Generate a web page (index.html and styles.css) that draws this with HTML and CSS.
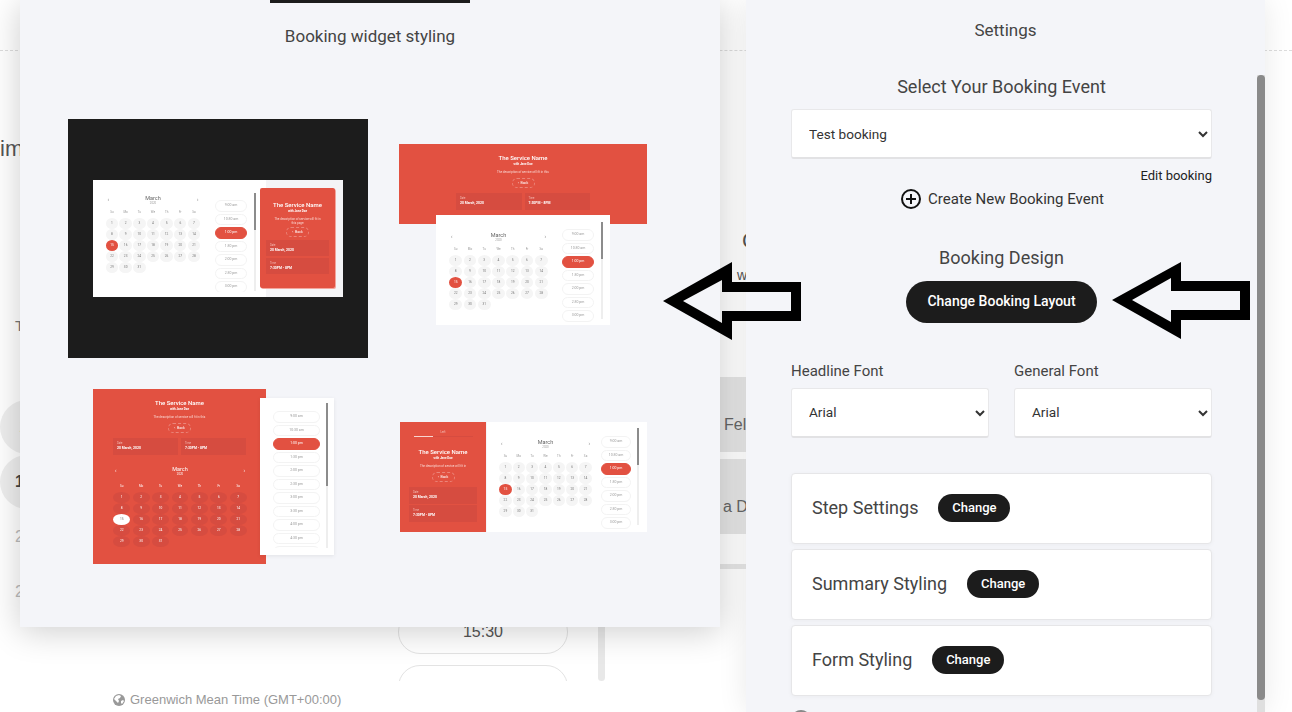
FILE: index.html
```html
<!DOCTYPE html>
<html lang="en">
<head>
<meta charset="utf-8">
<title>Booking widget styling</title>
<link rel="stylesheet" href="styles.css">
</head>
<body>
<div class="backdrop">
  <div class="bd-top"></div>
  <div class="bd-main">
    <div class="bd-left">
      <div class="bd-heading">im</div>
      <div class="bd-dow">T</div>
      <div class="bd-day bd-day-fill bd-day-first">1</div>
      <div class="bd-day bd-day-fill bd-day-bold">1</div>
      <div class="bd-day bd-day-off">2</div>
      <div class="bd-day bd-day-off">2</div>
      <div class="bd-zone">
        <svg class="globe" viewBox="0 0 12 12" aria-hidden="true"><circle cx="6" cy="6" r="6" fill="#999"/><path d="M3 2l3-1 2 1-1 2-2 1 1 2-1 2-2-2-2-2zM8 7l2-1 1 1-2 3-1-1z" fill="#fff"/></svg>
        <span>Greenwich Mean Time (GMT+00:00)</span>
      </div>
    </div>
    <div class="bd-times">
      <div class="bd-pill">15:30</div>
      <div class="bd-pill"></div>
    </div>
    <div class="bd-scroll"></div>
    <div class="bd-right">
      <div class="bd-c">C</div>
      <div class="bd-w">w</div>
      <div class="bd-box bd-box-a">Fel</div>
      <div class="bd-box bd-box-b">a D</div>
      <div class="bd-rule"></div>
    </div>
  </div>
</div>

<section class="modal">
  <div class="modal-tab"></div>
  <h2 class="modal-title">Booking widget styling</h2>
  <div class="thumbs">

    <div class="thumb t1">
      <div class="sheet">
        <div class="cal">
          <div class="cal-head"><b>‹</b><div class="month">March<small>2020</small></div><b>›</b></div>
          <div class="dows"><span>Su</span><span>Mo</span><span>Tu</span><span>We</span><span>Th</span><span>Fr</span><span>Sa</span></div>
          <div class="days"><span>1</span><span>2</span><span>3</span><span>4</span><span>5</span><span>6</span><span>7</span><span>8</span><span>9</span><span>10</span><span>11</span><span>12</span><span>13</span><span>14</span><span class="sel">15</span><span>16</span><span>17</span><span>18</span><span>19</span><span>20</span><span>21</span><span>22</span><span>23</span><span>24</span><span>25</span><span>26</span><span>27</span><span>28</span><span>29</span><span>30</span><span>31</span></div>
        </div>
        <div class="times"><span>9:00 am</span><span>10:30 am</span><span class="sel">1:00 pm</span><span>1:30 pm</span><span>2:00 pm</span><span>2:30 pm</span><span>3:00 pm</span></div>
        <div class="bar"></div>
        <div class="svc">
          <div class="svc-title">The Service Name</div>
          <div class="svc-sub">with Jane Doe</div>
          <div class="svc-desc">The description of service will fit in this page</div>
          <div class="svc-back">‹ &nbsp;Back</div>
          <div class="svc-boxes"><div class="svc-box"><i>Date</i><em>20 March, 2020</em></div><div class="svc-box"><i>Time</i><em>7:30PM - 8PM</em></div></div>
        </div>
      </div>
    </div>

    <div class="thumb t2">
      <div class="svc">
        <div class="svc-title">The Service Name</div>
        <div class="svc-sub">with Jane Doe</div>
        <div class="svc-desc">The description of service will fit in this</div>
        <div class="svc-back">‹ &nbsp;Back</div>
        <div class="svc-boxes"><div class="svc-box"><i>Date</i><em>20 March, 2020</em></div><div class="svc-box"><i>Time</i><em>7:30PM - 8PM</em></div></div>
      </div>
      <div class="sheet">
        <div class="cal">
          <div class="cal-head"><b>‹</b><div class="month">March<small>2020</small></div><b>›</b></div>
          <div class="dows"><span>Su</span><span>Mo</span><span>Tu</span><span>We</span><span>Th</span><span>Fr</span><span>Sa</span></div>
          <div class="days"><span>1</span><span>2</span><span>3</span><span>4</span><span>5</span><span>6</span><span>7</span><span>8</span><span>9</span><span>10</span><span>11</span><span>12</span><span>13</span><span>14</span><span class="sel">15</span><span>16</span><span>17</span><span>18</span><span>19</span><span>20</span><span>21</span><span>22</span><span>23</span><span>24</span><span>25</span><span>26</span><span>27</span><span>28</span><span>29</span><span>30</span><span>31</span></div>
        </div>
        <div class="times"><span>9:00 am</span><span>10:30 am</span><span class="sel">1:00 pm</span><span>1:30 pm</span><span>2:00 pm</span><span>2:30 pm</span><span>3:00 pm</span></div>
        <div class="bar"></div>
      </div>
    </div>

    <div class="thumb t3">
      <div class="svc">
        <div class="svc-title">The Service Name</div>
        <div class="svc-sub">with Jane Doe</div>
        <div class="svc-desc">The description of service will fit in this</div>
        <div class="svc-back">‹ &nbsp;Back</div>
        <div class="svc-boxes"><div class="svc-box"><i>Date</i><em>20 March, 2020</em></div><div class="svc-box"><i>Time</i><em>7:30PM - 8PM</em></div></div>
        <div class="cal">
          <div class="cal-head"><b>‹</b><div class="month">March<small>2020</small></div><b>›</b></div>
          <div class="dows"><span>Su</span><span>Mo</span><span>Tu</span><span>We</span><span>Th</span><span>Fr</span><span>Sa</span></div>
          <div class="days"><span>1</span><span>2</span><span>3</span><span>4</span><span>5</span><span>6</span><span>7</span><span>8</span><span>9</span><span>10</span><span>11</span><span>12</span><span>13</span><span>14</span><span class="sel">15</span><span>16</span><span>17</span><span>18</span><span>19</span><span>20</span><span>21</span><span>22</span><span>23</span><span>24</span><span>25</span><span>26</span><span>27</span><span>28</span><span>29</span><span>30</span><span>31</span></div>
        </div>
      </div>
      <div class="sheet">
        <div class="times"><span>9:00 am</span><span>10:30 am</span><span class="sel">1:00 pm</span><span>1:30 pm</span><span>2:00 pm</span><span>2:30 pm</span><span>3:00 pm</span><span>3:30 pm</span><span>4:00 pm</span><span>4:30 pm</span><span></span></div>
        <div class="bar"></div>
      </div>
    </div>

    <div class="thumb t4">
      <div class="svc">
        <div class="svc-tab">Left</div>
        <div class="svc-line"><span></span></div>
        <div class="svc-title">The Service Name</div>
        <div class="svc-sub">with Jane Doe</div>
        <div class="svc-desc">The description of service will fit in</div>
        <div class="svc-back">‹ &nbsp;Back</div>
        <div class="svc-boxes"><div class="svc-box"><i>Date</i><em>20 March, 2020</em></div><div class="svc-box"><i>Time</i><em>7:30PM - 8PM</em></div></div>
      </div>
      <div class="sheet">
        <div class="cal">
          <div class="cal-head"><b>‹</b><div class="month">March<small>2020</small></div><b>›</b></div>
          <div class="dows"><span>Su</span><span>Mo</span><span>Tu</span><span>We</span><span>Th</span><span>Fr</span><span>Sa</span></div>
          <div class="days"><span>1</span><span>2</span><span>3</span><span>4</span><span>5</span><span>6</span><span>7</span><span>8</span><span>9</span><span>10</span><span>11</span><span>12</span><span>13</span><span>14</span><span class="sel">15</span><span>16</span><span>17</span><span>18</span><span>19</span><span>20</span><span>21</span><span>22</span><span>23</span><span>24</span><span>25</span><span>26</span><span>27</span><span>28</span><span>29</span><span>30</span><span>31</span></div>
        </div>
        <div class="times"><span>9:00 am</span><span>10:30 am</span><span class="sel">1:00 pm</span><span>1:30 pm</span><span>2:00 pm</span><span>2:30 pm</span><span>3:00 pm</span></div>
        <div class="bar"></div>
      </div>
    </div>

  </div>
</section>

<aside class="panel">
  <div class="panel-title">Settings</div>
  <div class="panel-body">
    <div class="panel-content">
      <h3 class="head-event">Select Your Booking Event</h3>
      <select class="field field-event"><option>Test booking</option></select>
      <div class="edit">Edit booking</div>
      <div class="create">
        <svg class="plus" viewBox="0 0 20 20" aria-hidden="true"><circle cx="10" cy="10" r="9" fill="none" stroke="#111" stroke-width="2"/><path d="M10 5v10M5 10h10" stroke="#111" stroke-width="2"/></svg>
        <span>Create New Booking Event</span>
      </div>
      <h3 class="head-design">Booking Design</h3>
      <button class="layout-btn">Change Booking Layout</button>
      <div class="fonts">
        <label class="font-col"><span>Headline Font</span><select class="field"><option>Arial</option></select></label>
        <label class="font-col"><span>General Font</span><select class="field"><option>Arial</option></select></label>
      </div>
      <div class="cards">
        <div class="card"><span>Step Settings</span><button class="pill-btn">Change</button></div>
        <div class="card"><span>Summary Styling</span><button class="pill-btn">Change</button></div>
        <div class="card"><span>Form Styling</span><button class="pill-btn">Change</button></div>
      </div>
      <div class="next-dot"></div>
    </div>
    <div class="scroll"><div class="scroll-thumb"></div></div>
  </div>
</aside>

<svg class="arrow arrow-a" viewBox="663 262 139 78" aria-hidden="true"><path fill-rule="evenodd" d="M663 301L732 262V282H801V321H732V340ZM683 301L722 323V311H791V292H722V280Z"/></svg>
<svg class="arrow arrow-b" viewBox="1112 262 139 78" aria-hidden="true"><path fill-rule="evenodd" d="M1112 300L1181 262V281H1250V320H1181V339ZM1132 300L1171 322V310H1240V291H1171V278Z"/></svg>
</body>
</html>
```
FILE: styles.css
```css
* { box-sizing: border-box; }
html, body { margin: 0; height: 100%; overflow: hidden; }
body { background: #fff; font-family: Roboto, "Liberation Sans", sans-serif; color: #444; }

/* page underneath the overlays */
.backdrop { height: 712px; font-family: "Liberation Sans", Arial, sans-serif; color: #555; overflow: hidden; }
.bd-top { height: 51px; border-bottom: 1px dashed #ddd; }
.bd-main { display: flex; align-items: flex-start; }
.bd-left { width: 398px; flex: none; }
.bd-heading { margin-top: 86px; font-size: 22px; line-height: 24px; }
.bd-dow { margin-top: 156px; padding-left: 15px; font-size: 15px; line-height: 18px; color: #777; }
.bd-day { width: 54px; height: 54px; margin-bottom: 1px; padding-left: 15px; font-size: 16px; line-height: 54px; border-radius: 50%; }
.bd-day-fill { background: #eee; }
.bd-day-first { margin-top: 65px; padding-left: 19px; }
.bd-day-bold { font-weight: 700; color: #444; }
.bd-day-off { color: #bbb; }
.bd-zone { display: flex; align-items: center; gap: 5px; margin-top: 73px; padding-left: 113px; font-size: 13px; line-height: 16px; color: #999; white-space: nowrap; }
.globe { width: 12px; height: 12px; flex: none; }
.bd-times { width: 170px; height: 630px; flex: none; overflow: hidden; padding-top: 559px; }
.bd-pill { height: 44px; margin-bottom: 11px; border: 1px solid #e3e3e3; border-radius: 22px; text-align: center; font-size: 16px; line-height: 42px; }
.bd-scroll { width: 7px; height: 630px; margin-left: 30px; flex: none; background: #e8e8e8; border-radius: 0 0 4px 4px; }
.bd-right { width: 30px; margin-left: 115px; flex: none; }
.bd-c { margin-top: 178px; padding-left: 22px; font-size: 22px; line-height: 24px; }
.bd-w { margin-top: 14px; padding-left: 17px; font-size: 14px; line-height: 16px; }
.bd-box { height: 75px; padding-left: 4px; background: #e6e6e6; font-size: 16px; white-space: nowrap; color: #666; }
.bd-box-a { margin-top: 94px; line-height: 96px; }
.bd-box-b { margin-top: 7px; padding-left: 3px; line-height: 96px; }
.bd-rule { height: 5px; margin-top: 30px; background: #e6e6e6; }

/* overlay: layout chooser */
.modal { position: absolute; left: 20px; top: 0; width: 700px; height: 627px; background: #f4f5f9; box-shadow: 0 4px 32px rgba(0,0,0,.2); }
.modal-tab { width: 200px; height: 3px; margin-left: 250px; background: #1c1c1c; }
.modal-title { margin: 22px 0 0; font-size: 17px; font-weight: 400; line-height: 22px; text-align: center; color: #444; }
.thumbs { display: grid; grid-template-columns: 300px 248px; grid-template-rows: 270px auto; column-gap: 31px; margin: 72px 0 0 48px; }

.thumb { --red: #e25141; --redd: #d64c40; font-size: 3.5px; color: #777; }
.thumb .sheet, .thumb > .svc { filter: blur(.3px); }
.sheet { display: flex; align-items: flex-start; background: #fff; }
.cal { flex: none; width: var(--calw); }
.cal-head { display: flex; justify-content: space-between; height: 15px; padding: 2px 2px 0; }
.cal-head b { font-weight: 400; font-size: 5px; line-height: 8px; }
.month { font-size: 5.5px; line-height: 6px; text-align: center; color: #666; }
.month small { display: block; margin-top: .5px; font-size: 2.8px; line-height: 3px; color: #999; }
.dows, .days { display: grid; grid-template-columns: repeat(7, var(--cw)); justify-content: space-between; text-align: center; }
.dows { height: 9.5px; font-size: 3px; line-height: 9.5px; color: #999; }
.days { grid-auto-rows: 11px; }
.days span { margin: 0 .3px; border-radius: 50%; background: #f5f5f5; font-size: 3.2px; line-height: 11px; color: #777; }
.days .sel { background: var(--red); color: #fff; }
.times { display: flex; flex-direction: column; gap: 2px; flex: none; overflow: hidden; width: var(--pw); }
.times span { flex: none; height: 11.5px; border: 1px solid #f3f3f3; border-radius: 6px; background: #fff; text-align: center; line-height: 9.5px; color: #999; }
.times .sel { background: var(--red); border-color: var(--red); color: #fff; }
.bar { flex: none; width: 2px; background: linear-gradient(#8c8c8c var(--thumb), #eee var(--thumb)); }

.svc { background: var(--red); color: #fff; text-align: center; }
.svc-title { font-size: 6px; font-weight: 500; line-height: 7px; }
.svc-sub { margin-top: 1.5px; font-size: 3px; font-weight: 700; line-height: 4px; }
.svc-desc { margin: 4px auto 0; font-size: 3px; line-height: 4px; color: #f9d4cf; }
.svc-back { width: 23px; height: 10px; margin: 4px auto 0; border: 1px dashed rgba(255,255,255,.3); border-radius: 6px; font-size: 3.5px; line-height: 8px; }
.svc-boxes { display: flex; gap: 3px; margin-top: 5px; }
.svc-box { flex: 1; height: 17px; padding: 4px 4px 0; background: var(--redd); text-align: left; }
.svc-box i { display: block; font-style: normal; font-size: 2.6px; line-height: 3.5px; color: #f3bdb6; }
.svc-box em { display: block; font-style: normal; font-weight: 700; font-size: 3.4px; line-height: 4.5px; white-space: nowrap; }

.t1 { width: 300px; height: 239px; padding-top: 61px; padding-left: 25px; background: #1c1c1c; }
.t1 .sheet { position: relative; width: 250px; height: 117px; padding-left: 12.5px; background: linear-gradient(90deg, #fff 173px, #f4f4f6 173px); --calw: 95px; --cw: 13px; --pw: 32px; --thumb: 37px; }
.t1 .cal { margin-top: 13px; }
.t1 .times { height: 92px; margin: 20px 0 0 14.5px; }
.t1 .bar { height: 98px; margin: 13px 0 0 7px; }
.t1 .svc { width: 75px; height: 100px; margin: 8px 0 0 4px; padding: 12.5px 6px 0; border-radius: 2px; box-shadow: 1px 1px 0 #f3a59c; }
.t1 .svc-desc { width: 50px; }
.t1 .svc-back { margin-top: 2px; }
.t1 .svc-boxes { flex-direction: column; gap: 2px; margin-top: 3px; }
.t1 .svc-box { flex: none; height: 16px; }

.t2 { margin-top: 25px; height: 181px; }
.t2 .svc { height: 80px; padding: 9.5px 57px 0; }
.t2 .svc-boxes { width: 134px; }
.t2 .sheet { position: relative; width: 174px; height: 110px; margin: -9px 0 0 37px; padding-left: 13px; --calw: 99px; --cw: 13.5px; --pw: 32px; --thumb: 37px; }
.t2 .cal { margin-top: 15px; }
.t2 .times { height: 96px; margin: 14px 0 0 14px; }
.t2 .bar { height: 97px; margin: 7px 0 0 7px; }

.t3 { display: flex; align-items: flex-start; width: 241px; height: 176px; margin-left: 25px; }
.t3 .svc { position: relative; width: 173px; height: 175px; flex: none; padding: 9.5px 20px 0; }
.t3 .cal { --calw: 134px; --cw: 17.5px; margin-top: 5px; color: #fff; }
.t3 .cal-head { height: 21px; padding-top: 6px; }
.t3 .month, .t3 .month small, .t3 .dows { color: #fff; }
.t3 .dows { height: 11px; line-height: 11px; }
.t3 .days span { background: var(--redd); color: #fff; }
.t3 .days .sel { background: #fff; color: #777; }
.t3 .sheet { position: relative; flex: none; width: 74px; height: 157px; margin: 9px 0 0 -6px; padding-left: 13px; --pw: 47px; --thumb: 83px; box-shadow: 0 1px 4px rgba(0,0,0,.08); }
.t3 .times { height: 137px; margin-top: 13px; }
.t3 .bar { height: 145px; margin: 5px 0 0 6px; }

.t4 { display: flex; width: 247px; height: 110px; margin: 33px 0 0 1px; }
.t4 .svc { width: 86px; flex: none; padding: 8px 9px 0; }
.t4 .svc-tab { font-size: 3px; line-height: 4px; color: #f3bdb6; }
.t4 .svc-line { width: 59px; height: 1px; margin: 1.5px 0 11px 5px; background: var(--redd); }
.t4 .svc-line span { display: block; width: 19px; height: 1px; background: #f9d4cf; }
.t4 .svc-boxes { flex-direction: column; gap: 1px; margin-top: 5px; }
.t4 .svc-box { flex: none; }
.t4 .sheet { flex: none; width: 160px; height: 110px; margin-left: 1px; padding-left: 12px; --calw: 93px; --cw: 12.8px; --pw: 30px; --thumb: 37px; }
.t4 .cal { margin-top: 15px; }
.t4 .times { height: 97px; margin: 14px 0 0 9px; }
.t4 .bar { height: 97px; margin: 6px 0 0 6px; }

/* overlay: settings */
.panel { position: absolute; left: 746px; top: 0; width: 519px; height: 712px; overflow: hidden; background: #f4f5f9; box-shadow: 0 0 28px rgba(0,0,0,.09); }
.panel-title { height: 60px; font-size: 17px; line-height: 60px; text-align: center; color: #444; }
.panel-body { display: flex; }
.panel-content { width: 511px; padding: 16px 45px 0; flex: none; }
.head-event, .head-design { margin: 0; font-size: 18px; font-weight: 400; line-height: 22px; text-align: center; color: #444; }
.head-design { margin-top: 38px; }
.field { display: block; width: 100%; height: 50px; padding: 0 13px; background: #fff; border: 1px solid #e8e8ea; border-bottom: 2px solid #e2e2e4; border-radius: 3px; font-family: Roboto, sans-serif; font-size: 13.6px; color: #333; }
.field-event { margin-top: 11px; }
.font-col .field { padding-bottom: 2px; }
.edit { margin-top: 8.5px; font-size: 13px; line-height: 16px; text-align: right; color: #222; }
.create { display: flex; align-items: center; justify-content: center; gap: 7px; margin: 5.5px 0 0 2px; font-size: 15px; line-height: 20px; color: #333; }
.plus { width: 20px; height: 20px; flex: none; }
.layout-btn { display: block; width: 191px; height: 42px; margin: 12px auto 0; padding: 0 0 2px; border: 0; border-radius: 21px; background: #1c1c1c; color: #fff; font-family: Roboto, sans-serif; font-size: 14px; font-weight: 500; }
.fonts { display: grid; grid-template-columns: 198px 198px; justify-content: space-between; margin-top: 39px; }
.font-col span { display: block; margin-bottom: 8px; font-size: 15px; line-height: 18px; color: #444; }
.cards { display: flex; flex-direction: column; gap: 5.5px; margin-top: 35px; }
.card { display: flex; align-items: center; gap: 20px; height: 70.5px; padding: 0 0 1px 20px; background: #fff; border: 1px solid #e6e6e8; border-radius: 4px; font-size: 18px; color: #444; box-shadow: 0 1px 4px rgba(0,0,0,.04); }
.pill-btn { width: 72px; height: 28px; border: 0; border-radius: 14px; background: #1c1c1c; color: #fff; font-family: Roboto, sans-serif; font-size: 13px; font-weight: 500; }
.next-dot { width: 20px; height: 20px; margin: 14px 0 0 0; border: 2px solid #888; border-radius: 50%; }
.scroll { width: 8px; height: 652px; margin-top: 15px; flex: none; background: #dfdfdf; }
.scroll-thumb { height: 625px; background: #8a8a8a; border-radius: 4px; }

.arrow { position: absolute; fill: #000; width: 139px; height: 78px; top: 262px; }
.arrow-a { left: 663px; }
.arrow-b { left: 1112px; }
```
